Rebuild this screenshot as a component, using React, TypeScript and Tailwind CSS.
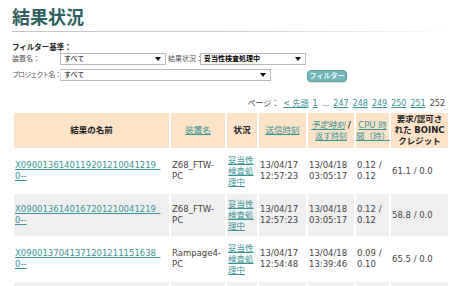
import React from "react";

const Arrow = () => (
  <svg width="6" height="4" viewBox="0 0 6 4" className="shrink-0">
    <path d="M0 0 L6 0 L3 4 Z" fill="#111" />
  </svg>
);

const Select = ({ w, text, bold, faintLeft }: { w: string; text: string; bold?: boolean; faintLeft?: boolean }) => (
  <div
    className={`${w} h-[12px] border border-[#b8b8b8] ${faintLeft ? "border-l-[#e6e6e6]" : ""} bg-white flex items-center justify-between pl-[3px] pr-[4px] text-[7px] leading-[10px] text-black ${bold ? "font-bold" : ""}`}
  >
    <span>{text}</span>
    <Arrow />
  </div>
);

const link = "text-[#3a9494] underline";

const rows = [
  {
    name: "X0900136140119201210041219_",
    host: ["Z68_FTW-", "PC"],
    sent: ["13/04/17", "12:57:23"],
    due: ["13/04/18", "03:05:17"],
    cpu: ["0.12 /", "0.12"],
    credit: "61.1 / 0.0",
  },
  {
    name: "X0900136140167201210041219_",
    host: ["Z68_FTW-", "PC"],
    sent: ["13/04/17", "12:57:23"],
    due: ["13/04/18", "03:05:17"],
    cpu: ["0.12 /", "0.12"],
    credit: "58.8 / 0.0",
  },
  {
    name: "X0900137041371201211151638_",
    host: ["Rampage4-", "PC"],
    sent: ["13/04/17", "12:54:48"],
    due: ["13/04/18", "13:39:46"],
    cpu: ["0.09 /", "0.10"],
    credit: "65.5 / 0.0",
  },
];

export default function App() {
  return (
    <div className="w-[470px] h-[286px] overflow-hidden bg-white pl-[12px] pt-[7px] font-['DejaVu_Sans','Noto_Sans_CJK_JP',sans-serif] text-[#444]">
      <h1 className="text-[18px] leading-[18px] font-bold text-[#2f5f5f] font-['Noto_Sans_CJK_JP',sans-serif]">
        結果状況
      </h1>
      <div className="mt-[6px] h-px w-[443px] bg-gradient-to-r from-[#c4c4c4] via-[#cfcfcf] to-transparent" />

      <div className="mt-[11px] text-[7.5px] leading-[10px] font-bold text-[#222]">フィルター基準：</div>
      <div className="flex items-center h-[12px] text-[7px] leading-[10px] text-[#555]">
        <div className="w-[48px]">装置名：</div>
        <Select w="w-[106px]" text="すべて" />
        <div className="w-[34px] pl-[2px] whitespace-nowrap">結果状況：</div>
        <Select w="w-[106px]" text="妥当性検査処理中" bold />
      </div>
      <div className="mt-[4px] flex items-start h-[12px] text-[7px] leading-[10px] text-[#555]">
        <div className="w-[48px] whitespace-nowrap tracking-[-0.9px] pt-[1px]">プロジェクト名：</div>
        <Select w="w-[211px]" text="すべて" faintLeft />
        <button className="ml-[36px] mt-[1px] w-[40px] h-[12px] rounded-[4px] bg-[#74b6b8] border border-[#5ea3a5] text-[7px] leading-[10px] text-[#e8fbfb] font-bold flex items-center justify-center shadow-[0_1px_1px_rgba(0,0,0,0.15)]">
          フィルター
        </button>
      </div>

      <div className="mt-[18px] w-[433px] flex justify-end gap-[4px] text-[8px] leading-[10px] text-[#444]">
        <span>ページ：</span>
        <span className={link}>&lt; 先頭</span>
        <span className={link}>1</span>
        <span>...</span>
        <span className={link}>247</span>
        <span className={link}>248</span>
        <span className={link}>249</span>
        <span className={link}>250</span>
        <span className={link}>251</span>
        <span>252</span>
      </div>

      <table className="mt-[2px] w-[438px] table-fixed border-separate border-spacing-[2px] text-[8.5px] leading-[11px]">
        <colgroup>
          <col className="w-[155px]" />
          <col className="w-[54px]" />
          <col className="w-[30px]" />
          <col className="w-[47px]" />
          <col className="w-[46px]" />
          <col className="w-[33px]" />
          <col className="w-[57px]" />
        </colgroup>
        <thead>
          <tr className="h-[35px] bg-[#fde3c7] text-center">
            <th className="font-bold text-[#222]">結果の名前</th>
            <th className="font-normal">
              <span className={link}>装置名</span>
            </th>
            <th className="font-bold text-[#222]">状況</th>
            <th className="font-normal">
              <span className={link}>送信時刻</span>
            </th>
            <th className="font-normal text-[#222]">
              <span className={`${link} italic`}>予定時刻</span> <span className="font-bold">/</span>
              <br />
              <span className={`${link} text-[8px]`}>返す時刻</span>
            </th>
            <th className="font-normal">
              <span className={link}>
                CPU 時<br />間（時）
              </span>
            </th>
            <th className="font-bold text-[#222]">
              要求/認可さ
              <br />
              れた BOINC
              <br />
              クレジット
            </th>
          </tr>
        </thead>
        <tbody>
          {rows.map((r, i) => (
            <tr key={i} className={`h-[42px] ${i % 2 === 1 ? "bg-[#efefef]" : "bg-white"} text-[#444]`}>
              <td className="px-px align-middle">
                <span className={link}>
                  {r.name}
                  <br />
                  0--
                </span>
              </td>
              <td className="px-px">
                {r.host[0]}
                <br />
                {r.host[1]}
              </td>
              <td className="px-px">
                <span className={link}>
                  妥当性
                  <br />
                  検査処
                  <br />
                  理中
                </span>
              </td>
              <td className="px-px">
                {r.sent[0]}
                <br />
                {r.sent[1]}
              </td>
              <td className="px-px">
                {r.due[0]}
                <br />
                {r.due[1]}
              </td>
              <td className="px-px">
                {r.cpu[0]}
                <br />
                {r.cpu[1]}
              </td>
              <td className="px-px">{r.credit}</td>
            </tr>
          ))}
          <tr className="h-[42px] bg-[#efefef]">
            <td />
            <td />
            <td />
            <td />
            <td />
            <td />
            <td />
          </tr>
        </tbody>
      </table>
    </div>
  );
}
